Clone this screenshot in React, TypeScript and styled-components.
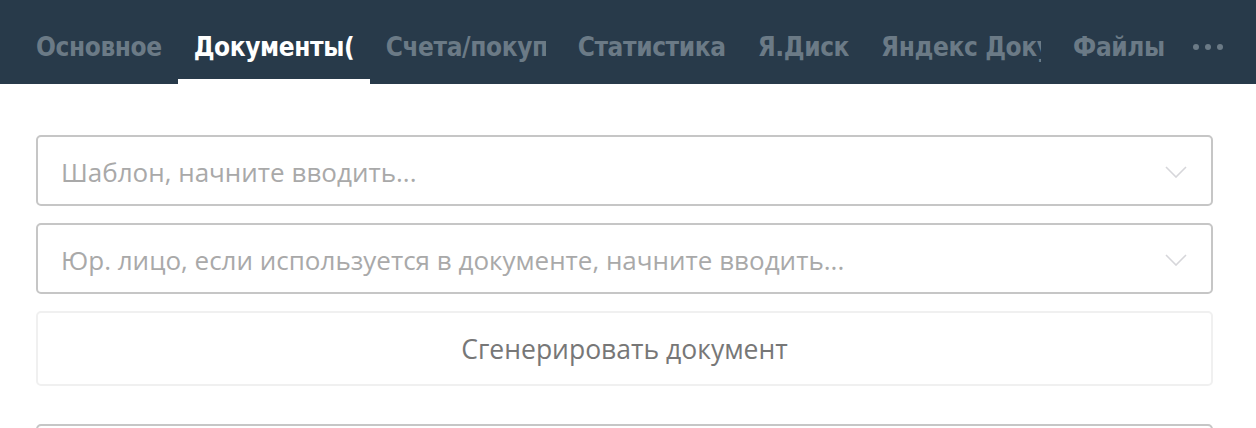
import React from "react";
import styled, { createGlobalStyle } from "styled-components";

const Global = createGlobalStyle`
  html, body { margin: 0; padding: 0; background: #ffffff; }
  body { font-family: "Open Sans", "Noto Sans", sans-serif; }
`;

const Page = styled.div`
  width: 1256px;
  height: 428px;
  overflow: hidden;
  background: #ffffff;
`;

const Header = styled.nav`
  height: 84px;
  background: #283a4a;
  display: flex;
  align-items: stretch;
  padding-left: 20px;
  box-sizing: border-box;
`;

const Tab = styled.div<{ $active?: boolean }>`
  position: relative;
  display: flex;
  align-items: center;
  padding: 10px 16px 0;
  font-family: "DejaVu Sans Condensed", "Liberation Sans Narrow", sans-serif;
  font-weight: 700;
  font-size: 26px;
  letter-spacing: -0.4px;
  color: ${(p) => (p.$active ? "#ffffff" : "#6b7a86")};
  &::after {
    content: "";
    position: absolute;
    left: 0;
    right: 0;
    bottom: 0;
    height: 5px;
    background: ${(p) => (p.$active ? "#ffffff" : "transparent")};
  }
`;

const TabLabel = styled.span`
  display: block;
  max-width: 160px;
  overflow: hidden;
  white-space: nowrap;
`;

const More = styled.div`
  display: flex;
  align-items: center;
  gap: 6px;
  padding: 10px 0 0 12px;
`;

const Dot = styled.span`
  width: 6px;
  height: 6px;
  border-radius: 50%;
  background: #6b7a86;
`;

const Main = styled.main`
  display: flex;
  flex-direction: column;
  gap: 17px;
  padding: 51px 43px 0 36px;
`;

const Select = styled.div`
  height: 71px;
  box-sizing: border-box;
  border: 2px solid #c6c6c6;
  border-radius: 5px;
  display: flex;
  align-items: center;
  justify-content: space-between;
  padding: 2px 24px 0 23px;
  font-size: 26px;
  color: #a9a9a9;
`;

const Chevron = () => (
  <svg width="22" height="12" viewBox="0 0 22 12" fill="none">
    <path d="M1 1 L11 11 L21 1" stroke="#d6d6da" strokeWidth="1.6" />
  </svg>
);

const Button = styled.div`
  height: 75px;
  box-sizing: border-box;
  border: 2px solid #f0f0f0;
  border-radius: 5px;
  display: flex;
  align-items: center;
  justify-content: center;
  font-size: 26.5px;
  color: #777777;
`;

const Panel = styled.div`
  margin-top: 21px;
  height: 80px;
  border: 2px solid #c6c6c6;
  border-radius: 5px;
`;

const tabs = [
  "Основное",
  "Документы(",
  "Счета/покупки",
  "Статистика",
  "Я.Диск",
  "Яндекс Документы",
  "Файлы",
];

export default function App() {
  return (
    <Page>
      <Global />
      <Header>
        {tabs.map((t, i) => (
          <Tab key={t} $active={i === 1}>
            <TabLabel>{t}</TabLabel>
          </Tab>
        ))}
        <More>
          <Dot />
          <Dot />
          <Dot />
        </More>
      </Header>
      <Main>
        <Select>
          <span>Шаблон, начните вводить...</span>
          <Chevron />
        </Select>
        <Select>
          <span>Юр. лицо, если используется в документе, начните вводить...</span>
          <Chevron />
        </Select>
        <Button>Сгенерировать документ</Button>
        <Panel />
      </Main>
    </Page>
  );
}
